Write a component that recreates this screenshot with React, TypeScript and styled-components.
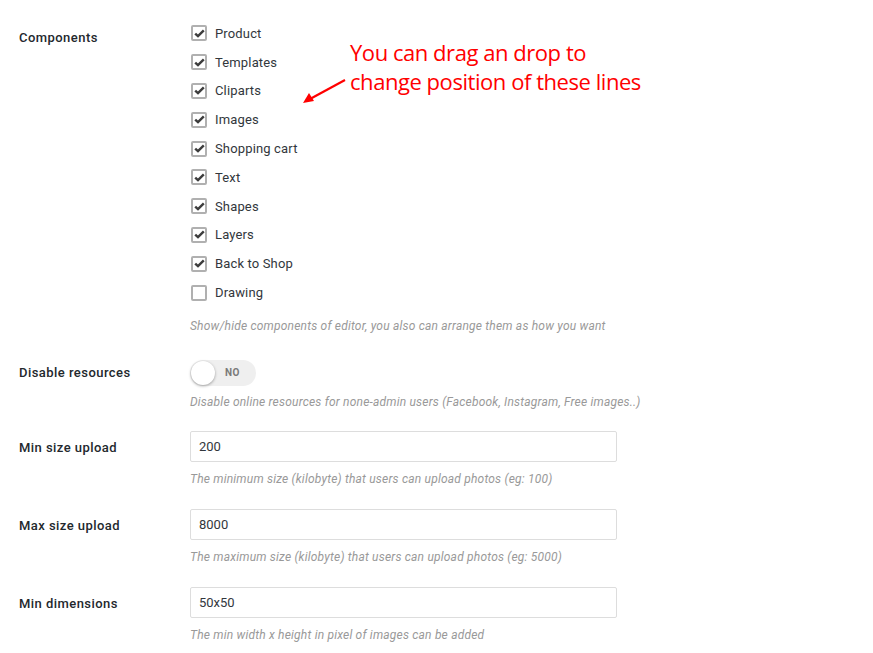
import styled, { createGlobalStyle } from "styled-components";

const GlobalStyle = createGlobalStyle`
  body {
    margin: 0;
    background: #fff;
    font-family: Roboto, "Liberation Sans", sans-serif;
    color: #32373c;
  }
`;

const Page = styled.div`
  position: relative;
  width: 873px;
  height: 653px;
  padding: 19px 0 0 19px;
  box-sizing: border-box;
  overflow: hidden;
`;

const Row = styled.div<{ $gap: number }>`
  display: grid;
  grid-template-columns: 171px 427px;
  margin-bottom: ${(p) => p.$gap}px;
`;

const Label = styled.div<{ $top?: number; $lh?: number }>`
  font-size: 13px;
  font-weight: 500;
  color: #23282d;
  line-height: ${(p) => p.$lh || 31}px;
  padding-top: ${(p) => p.$top || 0}px;
  letter-spacing: 0.45px;
`;

const Field = styled.div`
  display: flex;
  flex-direction: column;
`;

const CheckList = styled.ul`
  list-style: none;
  margin: 0;
  padding: 0;
`;

const CheckItem = styled.li`
  display: flex;
  align-items: center;
  height: 28.8px;
  font-size: 13px;
  color: #32373c;
  letter-spacing: 0.15px;
`;

const Box = styled.span`
  width: 16px;
  height: 16px;
  box-sizing: border-box;
  border: 2px solid #b0b0b0;
  border-radius: 2px;
  margin: 0 8px 0 1px;
  display: flex;
  align-items: center;
  justify-content: center;
  background: #fff;
`;

const Hint = styled.p<{ $top: number }>`
  margin: ${(p) => p.$top}px 0 0;
  font-size: 12px;
  line-height: 18px;
  font-style: italic;
  color: #999;
  white-space: nowrap;
  letter-spacing: 0.2px;
`;

const Toggle = styled.div`
  position: relative;
  width: 66px;
  height: 26px;
  border-radius: 13px;
  background: #efefef;
  display: flex;
  align-items: center;
  padding-left: 35px;
  box-sizing: border-box;
  font-size: 10px;
  font-weight: 700;
  color: #7a7a7a;
  letter-spacing: 0.5px;
`;

const Knob = styled.span`
  position: absolute;
  left: 1px;
  top: 1px;
  width: 24px;
  height: 24px;
  border-radius: 50%;
  background: #fff;
  box-shadow: 0 1px 3px rgba(0, 0, 0, 0.35);
`;

const Input = styled.input`
  width: 427px;
  height: 31px;
  box-sizing: border-box;
  border: 1px solid #ddd;
  border-radius: 2px;
  padding: 0 8px;
  font-family: Roboto, "Liberation Sans", sans-serif;
  font-size: 13px;
  color: #32373c;
  outline: none;
`;

const Note = styled.div`
  position: absolute;
  left: 350px;
  top: 38px;
  font-family: "Open Sans", "Liberation Sans", sans-serif;
  font-size: 22px;
  line-height: 29px;
  color: #f00;
  letter-spacing: -0.45px;
`;

const Arrow = styled.svg`
  position: absolute;
  left: 300px;
  top: 76px;
`;

const components = [
  ["Product", true],
  ["Templates", true],
  ["Cliparts", true],
  ["Images", true],
  ["Shopping cart", true],
  ["Text", true],
  ["Shapes", true],
  ["Layers", true],
  ["Back to Shop", true],
  ["Drawing", false],
] as const;

const inputs = [
  ["Min size upload", "200", "The minimum size (kilobyte) that users can upload photos (eg: 100)"],
  ["Max size upload", "8000", "The maximum size (kilobyte) that users can upload photos (eg: 5000)"],
  ["Min dimensions", "50x50", "The min width x height in pixel of images can be added"],
];

function Check({ on }: { on: boolean }) {
  return (
    <Box>
      {on && (
        <svg width="11" height="9" viewBox="0 0 11 9">
          <polyline points="1.2,4.6 4,7.2 9.8,1.4" fill="none" stroke="#3c3c3c" strokeWidth="2.4" />
        </svg>
      )}
    </Box>
  );
}

export default function App() {
  return (
    <Page>
      <GlobalStyle />
      <Row $gap={25}>
        <Label $top={3}>Components</Label>
        <Field>
          <CheckList>
            {components.map(([name, on]) => (
              <CheckItem key={name}>
                <Check on={on} />
                {name}
              </CheckItem>
            ))}
          </CheckList>
          <Hint $top={10}>Show/hide components of editor, you also can arrange them as how you want</Hint>
        </Field>
      </Row>
      <Row $gap={20}>
        <Label $lh={26}>Disable resources</Label>
        <Field>
          <Toggle>
            <Knob />
            NO
          </Toggle>
          <Hint $top={7}>Disable online resources for none-admin users (Facebook, Instagram, Free images..)</Hint>
        </Field>
      </Row>
      {inputs.map(([label, value, hint]) => (
        <Row $gap={21} key={label}>
          <Label $top={1}>{label}</Label>
          <Field>
            <Input defaultValue={value} />
            <Hint $top={8}>{hint}</Hint>
          </Field>
        </Row>
      ))}
      <Note>
        You can drag an drop to
        <br />
        change position of these lines
      </Note>
      <Arrow width="50" height="32" viewBox="0 0 50 32">
        <line x1="45" y1="4" x2="10" y2="23" stroke="#f00" strokeWidth="2.2" />
        <polygon points="3,27 9,17 14,25" fill="#f00" />
      </Arrow>
    </Page>
  );
}
